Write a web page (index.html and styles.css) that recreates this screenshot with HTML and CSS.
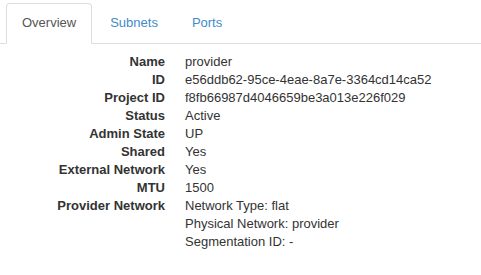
FILE: index.html
```html
<!DOCTYPE html>
<html lang="en">
<head>
  <meta charset="UTF-8" />
  <title>Network Detail</title>
  <link rel="stylesheet" href="styles.css">
</head>
<body>

  <ul class="nav-tabs">
    <li class="active"><a href="#">Overview</a></li>
    <li><a href="#">Subnets</a></li>
    <li><a href="#">Ports</a></li>
  </ul>

  <div class="tab-content">
    <dl class="dl-horizontal">
      <dt>Name</dt>
      <dd>provider</dd>
      <dt>ID</dt>
      <dd>e56ddb62-95ce-4eae-8a7e-3364cd14ca52</dd>
      <dt>Project ID</dt>
      <dd>f8fb66987d4046659be3a013e226f029</dd>
      <dt>Status</dt>
      <dd>Active</dd>
      <dt>Admin State</dt>
      <dd>UP</dd>
      <dt>Shared</dt>
      <dd>Yes</dd>
      <dt>External Network</dt>
      <dd>Yes</dd>
      <dt>MTU</dt>
      <dd>1500</dd>
      <dt>Provider Network</dt>
      <dd>
        Network Type: flat<br/>
        Physical Network: provider<br/>
        Segmentation ID: -
      </dd>
    </dl>
  </div>

</body>
</html>
```

FILE: styles.css
```css
body {
  margin: 0;
  padding: 3px 0 0 6px;
  font-family: "Liberation Sans", Arial, sans-serif;
  font-size: 13px;
  line-height: 18px;
  color: #333;
  background: #fff;
}
.nav-tabs {
  list-style: none;
  margin: 0;
  padding: 0;
  display: flex;
  border-bottom: 1px solid #ddd;
  margin-left: -6px;
  padding-left: 6px;
}
.nav-tabs li {
  margin-right: 2px;
  margin-bottom: -1px;
}
.nav-tabs a {
  display: block;
  padding: 10px 15px 11px;
  border: 1px solid transparent;
  border-radius: 4px 4px 0 0;
  color: #428bca;
  text-decoration: none;
}
.nav-tabs .active a {
  color: #555;
  background: #fff;
  border-color: #ddd #ddd transparent;
}
.tab-content {
  padding-top: 9px;
}
.dl-horizontal {
  margin: 0;
  display: grid;
  grid-template-columns: 160px 1fr;
  column-gap: 20px;
  margin-left: -1px;
}
.dl-horizontal dt {
  font-weight: bold;
  text-align: right;
  white-space: nowrap;
}
.dl-horizontal dd {
  margin: 0;
}
```
